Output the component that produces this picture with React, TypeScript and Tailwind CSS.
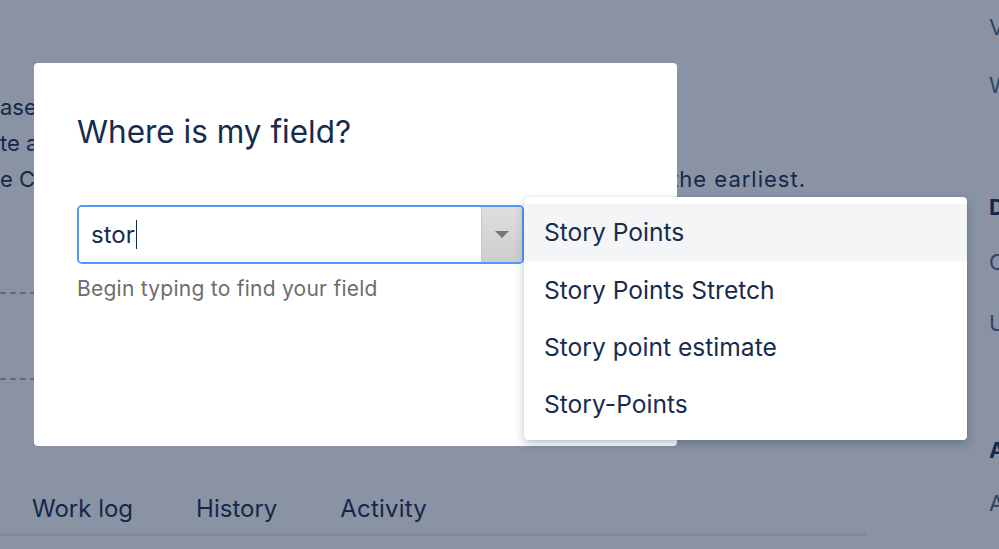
import { useState } from "react";

const options = [
  "Story Points",
  "Story Points Stretch",
  "Story point estimate",
  "Story-Points",
];

const font = { fontFamily: "Inter, 'Noto Sans', sans-serif" };

const App = () => {
  const [query] = useState<string>("stor");
  const [active, setActive] = useState<number>(0);

  return (
    <div
      className="relative w-[999px] h-[549px] overflow-hidden bg-[#8993a4] text-[#15284a] flex"
      style={font}
    >
      {/* page behind the blanket */}
      <div className="w-[989px] shrink-0 flex flex-col">
        <div className="pt-[89px] text-[22px] leading-[36px]">
          <p>ase</p>
          <p>te a</p>
          <div className="flex justify-between w-[806px]">
            <span>e C</span>
            <span className="tracking-[1px]">the earliest.</span>
          </div>
        </div>
        <div className="mt-[95px] w-[520px] border-t-2 border-dashed border-[#5f6b82]" />
        <div className="mt-[84px] w-[520px] border-t-2 border-dashed border-[#5f6b82]" />
        <div className="mt-[112px] flex gap-[63px] pl-[32px] text-[24px] leading-[34px]">
          <span>Work log</span>
          <span>History</span>
          <span className="tracking-[0.2px]">Activity</span>
        </div>
        <div className="mt-[7px] w-[866px] h-[3px] bg-[#7f8a9c]" />
      </div>
      <div className="shrink-0 flex flex-col text-[22px] leading-[30px] text-[#34445f]">
        <span className="mt-[12px]">V</span>
        <span className="mt-[28px]">W</span>
        <span className="mt-[92px] font-bold text-[#15284a]">D</span>
        <span className="mt-[25px]">C</span>
        <span className="mt-[31px]">U</span>
        <span className="mt-[97px] font-bold text-[#15284a]">A</span>
        <span className="mt-[23px]">A</span>
      </div>

      {/* modal */}
      <div className="absolute left-[34px] top-[63px] w-[643px] h-[383px] bg-white rounded-[4px] px-[43px] pt-[49px]">
        <h2 className="text-[31.5px] leading-[40px] text-[#172b4d]">
          Where is my field?
        </h2>
        <div className="mt-[53px] flex h-[59px] w-[447px] border-2 border-[#4c9aff] rounded-[5px] overflow-hidden">
          <div className="flex-1 flex items-center px-[12px] text-[24px] text-[#172b4d] bg-white">
            <span>{query}</span>
            <span className="ml-[1px] w-[1.5px] h-[29px] bg-[#172b4d]" />
          </div>
          <div className="w-[41px] flex items-center justify-center bg-gradient-to-b from-[#dedede] to-[#cdcdcd] border-l border-[#c7c7c7]">
            <div className="w-0 h-0 border-l-[7px] border-r-[7px] border-t-[7px] border-l-transparent border-r-transparent border-t-[#777]" />
          </div>
        </div>
        <p className="mt-[10px] text-[21px] tracking-[0.25px] leading-[30px] text-[#6d6d6d]">
          Begin typing to find your field
        </p>
      </div>

      {/* suggestions */}
      <ul className="absolute left-[524px] top-[197px] w-[443px] py-[7px] bg-white rounded-[4px] shadow-[0_4px_10px_rgba(9,30,66,0.25),0_0_1px_rgba(9,30,66,0.31)]">
        {options.map((opt, i) => (
          <li
            key={opt}
            onMouseEnter={() => setActive(i)}
            className={`h-[57.3px] flex items-center px-[20px] text-[24.6px] text-[#172b4d] ${
              i === active ? "bg-[#f4f5f7]" : ""
            }`}
          >
            {opt}
          </li>
        ))}
      </ul>
    </div>
  );
};

export default App;
